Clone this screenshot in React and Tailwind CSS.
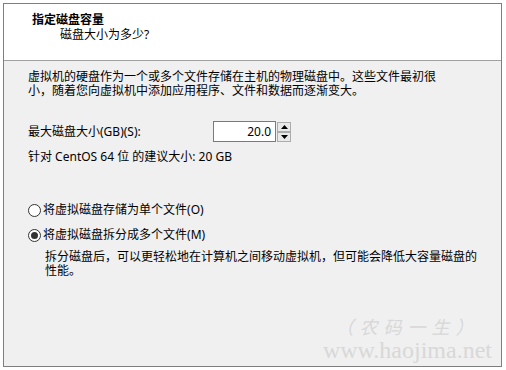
const Radio = ({ checked, label, hotkey }) => (
  <label className="flex h-[16px] items-center">
    <span className="flex h-[13px] w-[13px] items-center justify-center rounded-full border border-[#333333] bg-white">
      {checked && <span className="h-[7px] w-[7px] rounded-full bg-[#333333]" />}
    </span>
    <span className="ml-[2px]">
      {label}({hotkey})
    </span>
  </label>
);

const SpinButton = ({ up }) => (
  <div className="flex h-[10px] w-[14px] items-center justify-center border border-[#acacac] bg-[#e9e9e9]">
    <svg width="7" height="4" viewBox="0 0 7 4">
      {up ? <path d="M3.5 0 L7 4 L0 4 Z" fill="#000" /> : <path d="M0 0 L7 0 L3.5 4 Z" fill="#000" />}
    </svg>
  </div>
);

export default function App() {
  return (
    <div
      className="min-h-screen bg-white p-[3px] text-[12px] text-black"
      style={{ fontFamily: '"Noto Sans", "Noto Sans CJK SC", sans-serif' }}
    >
      <div className="relative flex h-[364px] w-[499px] flex-col border border-[#7f7f7f] bg-[#f0f0f0]">
        {/* header */}
        <div className="h-[57px] border-b border-[#a0a0a0] bg-white pl-[28px] pt-[8px] leading-[15px]">
          <div className="h-[15px] font-bold">指定磁盘容量</div>
          <div className="h-[15px] pl-[28px]">磁盘大小为多少?</div>
        </div>

        {/* body */}
        <div className="flex flex-col pl-[24px] pt-[9px] leading-[14px]">
          <div className="h-[14px] whitespace-nowrap">虚拟机的硬盘作为一个或多个文件存储在主机的物理磁盘中。这些文件最初很</div>
          <div className="h-[14px] whitespace-nowrap">小，随着您向虚拟机中添加应用程序、文件和数据而逐渐变大。</div>

          <div className="mt-[23px] flex h-[21px] items-center">
            <span className="w-[185px]">最大磁盘大小(GB)(S):</span>
            <div className="flex h-[21px] w-[63px] items-center justify-end border border-[#7a7a7a] bg-white pr-[4px]">
              20.0
            </div>
            <div className="ml-[1px] flex flex-col">
              <SpinButton up />
              <SpinButton />
            </div>
          </div>

          <div className="mt-[8px] h-[14px]">针对 CentOS 64 位 的建议大小: 20 GB</div>

          <div className="mt-[38px]">
            <Radio label="将虚拟磁盘存储为单个文件" hotkey="O" />
          </div>
          <div className="mt-[9px]">
            <Radio checked label="将虚拟磁盘拆分成多个文件" hotkey="M" />
          </div>
          <div className="mt-[7px] flex flex-col whitespace-nowrap pl-[17px]">
            <div className="h-[14px]">拆分磁盘后，可以更轻松地在计算机之间移动虚拟机，但可能会降低大容量磁盘的</div>
            <div className="h-[14px]">性能。</div>
          </div>
        </div>

        {/* watermark */}
        <div className="pointer-events-none absolute bottom-[3px] right-[9px] flex flex-col items-center text-[#d8d8d8]">
          <div
            className="h-[22px] text-[18px] italic leading-[22px] tracking-[6px]"
            style={{ fontFamily: '"Noto Sans CJK SC", serif' }}
          >
            （农码一生）
          </div>
          <div
            className="h-[26px] text-[24px] leading-[26px]"
            style={{ fontFamily: '"Liberation Serif", serif' }}
          >
            www.haojima.net
          </div>
        </div>
      </div>
    </div>
  );
}
